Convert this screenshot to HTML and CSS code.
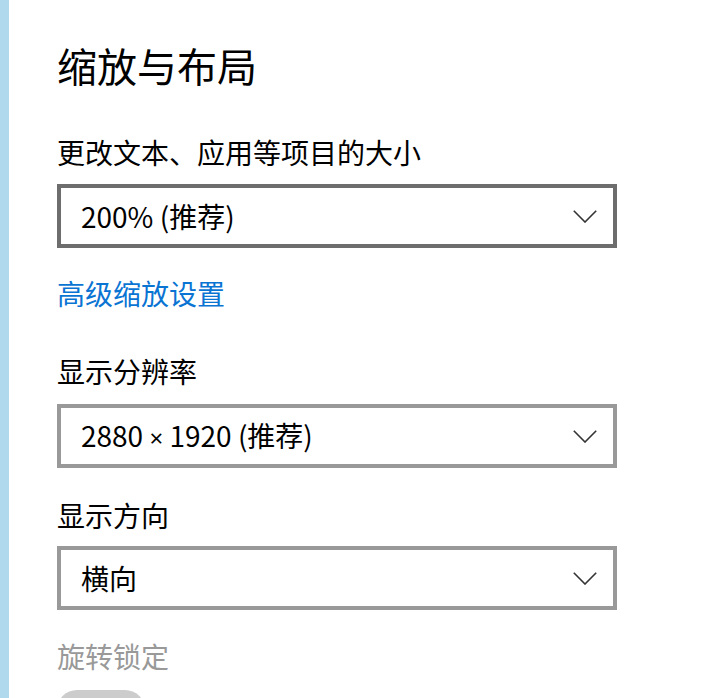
FILE: index.html
```html
<!DOCTYPE html>
<html lang="zh-CN">
<head>
<meta charset="utf-8">
<title>缩放与布局</title>
<link rel="stylesheet" href="styles.css">
</head>
<body>
<div class="page">
  <div class="stripe"></div>
  <main class="content">
    <h1 class="title">缩放与布局</h1>

    <div class="label label-first">更改文本、应用等项目的大小</div>
    <div class="select select-active">
      <span class="select-text">200% (推荐)</span>
      <svg class="chev" width="24" height="13" viewBox="0 0 24 13"><polyline points="0.8,0.8 12,12 23.2,0.8"/></svg>
    </div>

    <a class="link" href="#">高级缩放设置</a>

    <div class="label label-res">显示分辨率</div>
    <div class="select select-res">
      <span class="select-text">2880 <span class="times">×</span> 1920 (推荐)</span>
      <svg class="chev" width="24" height="13" viewBox="0 0 24 13"><polyline points="0.8,0.8 12,12 23.2,0.8"/></svg>
    </div>

    <div class="label label-orient">显示方向</div>
    <div class="select select-orient">
      <span class="select-text">横向</span>
      <svg class="chev" width="24" height="13" viewBox="0 0 24 13"><polyline points="0.8,0.8 12,12 23.2,0.8"/></svg>
    </div>

    <div class="label label-disabled">旋转锁定</div>
    <div class="toggle"></div>
  </main>
</div>
</body>
</html>
```

FILE: styles.css
```css
* { box-sizing: border-box; }

html, body {
  margin: 0;
  padding: 0;
  background: #ffffff;
}

body {
  font-family: "Noto Sans CJK SC", "Noto Sans", sans-serif;
  color: #000000;
}

.page {
  display: flex;
  width: 715px;
  height: 698px;
  overflow: hidden;
}

.stripe {
  flex: 0 0 9px;
  background: #b0d9ed;
}

.content {
  flex: 1;
  padding: 41px 0 0 48px;
  display: flex;
  flex-direction: column;
  align-items: flex-start;
}

.content > * {
  flex-shrink: 0;
}

.title {
  margin: 0;
  font-size: 40px;
  line-height: 48px;
  font-weight: 400;
}

.label {
  font-size: 28px;
  line-height: 36px;
}

.label-first { margin-top: 45px; }
.label-res { margin-top: 42px; }
.label-orient { margin-top: 29px; }
.label-disabled { margin-top: 28px; color: #999999; }

.select {
  width: 560px;
  height: 64px;
  border: 4px solid #999999;
  display: flex;
  align-items: center;
  justify-content: space-between;
  padding: 0 16px 0 20px;
  background: #ffffff;
}

.select-active {
  margin-top: 14px;
  border-color: #6d6d6d;
}
.select-res { margin-top: 15px; }
.select-orient { margin-top: 13px; }

.select-text {
  font-size: 28px;
  line-height: 36px;
}

.times {
  font-family: "Noto Sans", sans-serif;
  font-size: 24px;
}

.chev polyline {
  fill: none;
  stroke: #333333;
  stroke-width: 1.6;
}

.link {
  margin-top: 27px;
  font-size: 28px;
  line-height: 36px;
  color: #0a74d3;
  text-decoration: none;
}

.toggle {
  margin-top: 16px;
  width: 88px;
  height: 40px;
  border-radius: 20px;
  background: #cccccc;
}
```
